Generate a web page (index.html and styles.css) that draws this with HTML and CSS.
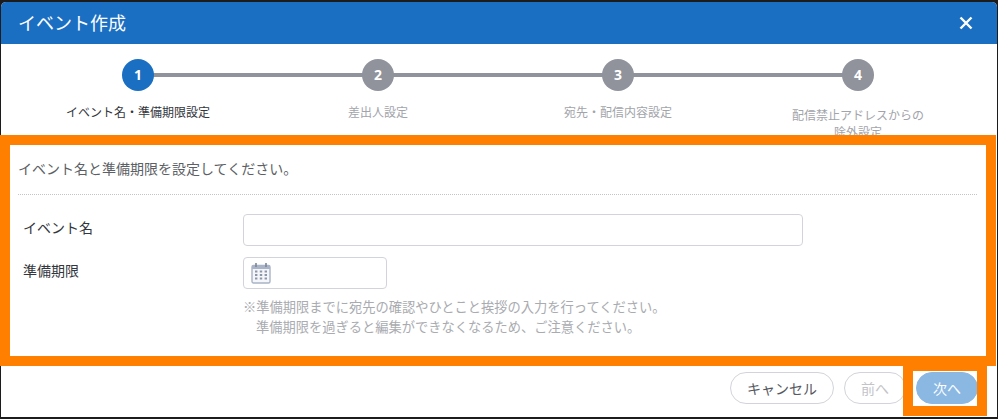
FILE: index.html
```html
<!DOCTYPE html>
<html lang="ja">
<head>
<meta charset="utf-8">
<title>イベント作成</title>
<link rel="stylesheet" href="styles.css">
</head>
<body>
<div class="dialog">
  <header class="dialog-head">
    <h1 class="dialog-title">イベント作成</h1>
    <svg class="close-icon" viewBox="0 0 14 14" aria-label="閉じる"><path d="M1.5 1.5 12.5 12.5M12.5 1.5 1.5 12.5"/></svg>
  </header>
  <ol class="steps">
    <li class="step step-current"><span class="step-num">1</span><span class="step-label">イベント名・準備期限設定</span></li>
    <li class="step"><span class="step-num">2</span><span class="step-label">差出人設定</span></li>
    <li class="step"><span class="step-num">3</span><span class="step-label">宛先・配信内容設定</span></li>
    <li class="step step-last"><span class="step-num">4</span><span class="step-label step-label-wrap">配信禁止アドレスからの<br>除外設定</span></li>
  </ol>
  <main class="panel">
    <p class="lead">イベント名と準備期限を設定してください。</p>
    <div class="form-row">
      <label class="form-label">イベント名</label>
      <div class="field field-wide"></div>
    </div>
    <div class="form-row form-row-date">
      <label class="form-label">準備期限</label>
      <div class="form-body">
        <div class="field field-date">
          <svg class="cal-icon" viewBox="0 0 20 22">
            <rect class="cal-body" x="1" y="3.5" width="18" height="17.5" rx="1.5"/>
            <rect class="cal-top" x="1" y="3.5" width="18" height="3.5"/>
            <path class="cal-ring" d="M5 1v4M15 1v4"/>
            <path class="cal-grid" d="M4 9.5h2.4M8.8 9.5h2.4M13.6 9.5H16M4 13h2.4M8.8 13h2.4M13.6 13H16M4 16.5h2.4M8.8 16.5h2.4M13.6 16.5H16"/>
          </svg>
        </div>
        <p class="note">※準備期限までに宛先の確認やひとこと挨拶の入力を行ってください。<br><span class="note-indent">準備期限を過ぎると編集ができなくなるため、ご注意ください。</span></p>
      </div>
    </div>
  </main>
  <footer class="dialog-foot">
    <button class="btn btn-cancel">キャンセル</button>
    <button class="btn btn-prev">前へ</button>
    <button class="btn btn-next">次へ</button>
  </footer>
</div>
<div class="mark mark-panel"></div>
<div class="mark mark-next"></div>
</body>
</html>
```
FILE: styles.css
```css
* { box-sizing: border-box; }
html, body { margin: 0; height: 419px; overflow: hidden; }
body {
  position: relative;
  background: #1c1c1c;
  padding: 2px 1px 2px 1px;
  font-family: "Noto Sans CJK JP", "Noto Sans", sans-serif;
}
.dialog {
  height: 415px;
  background: #fff;
  border-radius: 5px 5px 0 0;
  overflow: hidden;
  display: flex;
  flex-direction: column;
}
.dialog-head {
  height: 42px;
  flex: none;
  background: #1a6fc3;
  color: #fff;
  display: flex;
  align-items: center;
  justify-content: space-between;
  padding: 0 24px 0 17px;
}
.dialog-title { margin: 0 0 2px; font-size: 18px; font-weight: 400; line-height: 40px; }
.close-icon { width: 14px; height: 14px; fill: none; stroke: #fff; stroke-width: 2.4; }
.steps {
  list-style: none;
  margin: 0;
  padding: 15px 0 0 17px;
  height: 91px;
  flex: none;
  display: grid;
  grid-template-columns: repeat(4, 240px);
}
.step {
  position: relative;
  display: flex;
  flex-direction: column;
  align-items: center;
}
.step::after {
  content: "";
  position: absolute;
  left: 50%;
  top: 14px;
  width: 100%;
  height: 4px;
  background: #90939b;
}
.step-last::after { display: none; }
.step-num {
  position: relative;
  z-index: 1;
  width: 32px;
  height: 32px;
  border-radius: 50%;
  background: #90939b;
  color: #fff;
  font: 700 14px/32px "Open Sans", "Noto Sans", sans-serif;
  text-align: center;
}
.step-current .step-num { background: #1a6fc3; }
.step-label {
  margin-top: 12px;
  font-size: 12px;
  line-height: 18px;
  color: #a2a4aa;
  text-align: center;
  white-space: nowrap;
}
.step-current .step-label { color: #33363c; }
.step-label-wrap { margin-top: 15px; line-height: 17px; }
.panel { flex: 1; padding: 10px 20px 0 17px; background: #fff; }
.lead {
  margin: 0;
  height: 50px;
  padding-top: 11px;
  font-size: 14px;
  line-height: 24px;
  color: #5c5f65;
  border-bottom: 1px dotted #c4c4c4;
}
.form-row { display: flex; margin-top: 19px; }
.form-row-date { margin-top: 11px; }
.form-label {
  width: 225px;
  flex: none;
  padding-left: 5px;
  font-size: 14px;
  line-height: 26px;
  color: #33363c;
}
.field {
  height: 32px;
  border: 1.5px solid #d3d4da;
  border-radius: 4px;
  background: #fff;
}
.field-wide { width: 560px; }
.field-date {
  width: 144px;
  display: flex;
  align-items: center;
  padding-left: 7px;
}
.cal-icon { width: 20px; height: 22px; }
.cal-body { fill: #f4f6fa; stroke: #a9b4c8; stroke-width: 1.4; }
.cal-top { fill: #a9b4c8; }
.cal-ring { stroke: #7d8696; stroke-width: 1.6; fill: none; }
.cal-grid { stroke: #8c96aa; stroke-width: 2; fill: none; }
.note {
  margin: 8px 0 0;
  font-size: 13.25px;
  line-height: 20px;
  color: #a9abb0;
  white-space: nowrap;
}
.note-indent { padding-left: 13px; }
.dialog-foot {
  flex: none;
  height: 52px;
  padding: 7px 19px 0 0;
  display: flex;
  justify-content: flex-end;
  gap: 10px;
}
.btn {
  height: 32px;
  padding: 0;
  border-radius: 16px;
  font-family: inherit;
  font-size: 14px;
  line-height: 28px;
  background: #fff;
  border: 1.5px solid #d3d4da;
  color: #55585e;
}
.btn-cancel { width: 104px; }
.btn-prev { width: 62px; color: #c2c4c8; }
.btn-next { width: 62px; background: #8ab8e3; border-color: #8ab8e3; color: #fff; }
.mark { position: absolute; border: 10px solid #ff8000; }
.mark-panel { left: 0; top: 135px; width: 996px; height: 231px; }
.mark-next { left: 903px; top: 361px; width: 84px; height: 55px; }
```
